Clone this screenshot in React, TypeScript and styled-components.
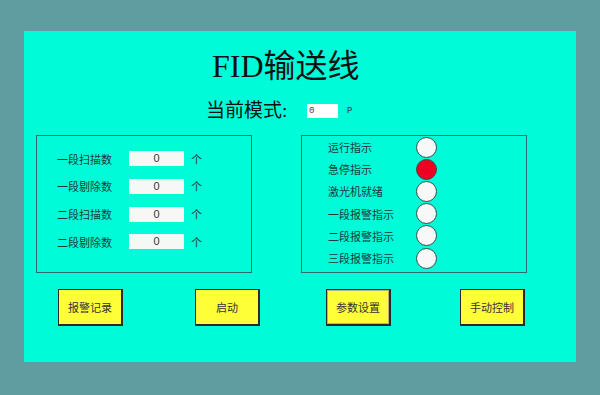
import styled, { createGlobalStyle } from 'styled-components';

const GlobalStyle = createGlobalStyle`
  html, body {
    margin: 0;
    padding: 0;
  }
  body {
    background-color: #5f9ea0;
    font-family: 'Liberation Sans', 'Noto Sans CJK SC', sans-serif;
  }
`;

const Screen = styled.div`
  width: 600px;
  height: 395px;
  box-sizing: border-box;
  padding: 31px 24px 0;
  overflow: hidden;
`;

const Panel = styled.div`
  width: 552px;
  height: 331px;
  background-color: #00fbd9;
  display: flex;
  flex-direction: column;
`;

const Title = styled.h1`
  margin: 17px 0 0;
  padding-left: 188px;
  font-family: 'Liberation Serif', 'Noto Sans CJK SC', serif;
  font-weight: normal;
  font-size: 32px;
  line-height: 36px;
  color: #111;
`;

const ModeRow = styled.div`
  margin-top: 17px;
  padding-left: 182px;
  height: 20px;
  display: flex;
  align-items: center;
`;

const ModeLabel = styled.span`
  width: 101px;
  font-family: 'Liberation Serif', 'Noto Sans CJK SC', serif;
  font-size: 19px;
  line-height: 20px;
  color: #111;
`;

const ModeInput = styled.div`
  width: 31px;
  height: 14px;
  background-color: #ffffff;
  font-family: 'Liberation Mono', monospace;
  font-size: 9px;
  line-height: 14px;
  color: #444;
  padding-left: 2px;
  box-sizing: border-box;
`;

const Unit = styled.span`
  margin-left: 9px;
  font-family: 'Liberation Mono', monospace;
  font-size: 9px;
  color: #333;
`;

const BoxRow = styled.div`
  margin-top: 14px;
  padding-left: 12px;
  display: flex;
  gap: 49px;
`;

const Box = styled.div<{ $width: number }>`
  width: ${({ $width }) => $width}px;
  height: 138px;
  box-sizing: border-box;
  border: 1px solid #2e6e6a;
`;

const CounterList = styled.div`
  padding: 9px 0 0 20px;
  display: grid;
  grid-auto-rows: 27.67px;
`;

const CounterRow = styled.div`
  display: flex;
  align-items: center;
`;

const Label = styled.span<{ $width: number }>`
  width: ${({ $width }) => $width}px;
  font-size: 11px;
  color: #1e3a3a;
  white-space: nowrap;
`;

const ValueBox = styled.div`
  width: 55px;
  height: 15px;
  background-color: #f6f8f6;
  font-size: 11px;
  line-height: 15px;
  text-align: center;
  color: #333;
`;

const Piece = styled.span`
  margin-left: 7px;
  font-size: 11px;
  color: #1e3a3a;
`;

const LampList = styled.div`
  padding-left: 26px;
  display: grid;
  grid-auto-rows: 22.2px;
`;

const LampRow = styled.div`
  display: flex;
  align-items: center;
`;

const Lamp = styled.div<{ $on?: boolean }>`
  width: 21px;
  height: 21px;
  box-sizing: border-box;
  border-radius: 50%;
  border: 1px solid #3a4a4a;
  background-color: ${({ $on }) => ($on ? '#ee0022' : '#f8f8f8')};
`;

const ButtonRow = styled.div`
  margin-top: 16px;
  display: flex;
`;

const Button = styled.button<{ $left: number; $focused?: boolean }>`
  margin-left: ${({ $left }) => $left}px;
  width: 65px;
  height: 37px;
  padding: 0;
  background-color: #ffff38;
  border: 1px solid #2a2a2a;
  border-right-width: 2px;
  border-bottom-width: 2px;
  box-shadow: ${({ $focused }) => ($focused ? 'inset 0 0 0 1px #b4b47a' : 'none')};
  font-family: 'Noto Sans CJK SC', sans-serif;
  font-size: 11px;
  color: #333;
  cursor: pointer;
`;

const counters = ['一段扫描数', '一段剔除数', '二段扫描数', '二段剔除数'];

const lamps = [
  { name: '运行指示', on: false },
  { name: '急停指示', on: true },
  { name: '激光机就绪', on: false },
  { name: '一段报警指示', on: false },
  { name: '二段报警指示', on: false },
  { name: '三段报警指示', on: false },
];

const buttons = [
  { text: '报警记录', left: 34 },
  { text: '启动', left: 72 },
  { text: '参数设置', left: 66, focused: true },
  { text: '手动控制', left: 69 },
];

export default function App() {
  return (
    <>
      <GlobalStyle />
      <Screen>
        <Panel>
          <Title>FID输送线</Title>
          <ModeRow>
            <ModeLabel>当前模式:</ModeLabel>
            <ModeInput>0</ModeInput>
            <Unit>P</Unit>
          </ModeRow>
          <BoxRow>
            <Box $width={216}>
              <CounterList>
                {counters.map((c) => (
                  <CounterRow key={c}>
                    <Label $width={72}>{c}</Label>
                    <ValueBox>0</ValueBox>
                    <Piece>个</Piece>
                  </CounterRow>
                ))}
              </CounterList>
            </Box>
            <Box $width={226}>
              <LampList>
                {lamps.map((l) => (
                  <LampRow key={l.name}>
                    <Label $width={88}>{l.name}</Label>
                    <Lamp $on={l.on} />
                  </LampRow>
                ))}
              </LampList>
            </Box>
          </BoxRow>
          <ButtonRow>
            {buttons.map((b) => (
              <Button key={b.text} $left={b.left} $focused={b.focused}>
                {b.text}
              </Button>
            ))}
          </ButtonRow>
        </Panel>
      </Screen>
    </>
  );
}
